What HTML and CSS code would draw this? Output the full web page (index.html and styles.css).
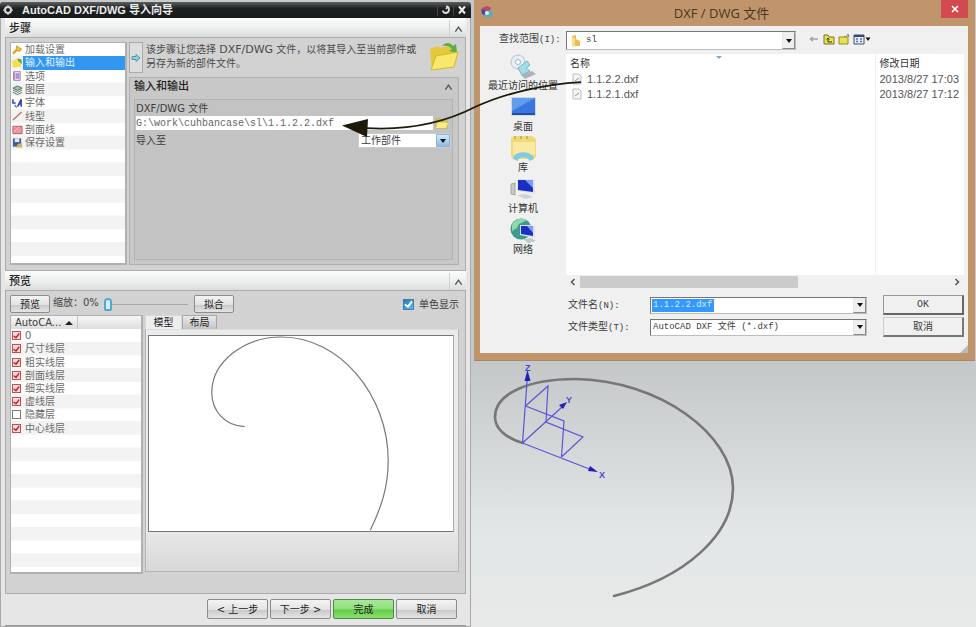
FILE: index.html
```html
<!DOCTYPE html>
<html lang="zh-CN">
<head>
<meta charset="utf-8">
<title>AutoCAD DXF/DWG 导入向导</title>
<link rel="stylesheet" href="styles.css">
</head>
<body>
<main class="desktop">
  <section class="wizard">
    <header class="wizard-title">
      <svg class="gear" viewBox="0 0 12 12"><circle cx="6" cy="6" r="3" fill="none" stroke="#ddd" stroke-width="2"/><path d="M6 1v2M6 9v2M1 6h2M9 6h2" stroke="#bbb" stroke-width="1.5"/></svg>
      <h1>AutoCAD DXF/DWG 导入向导</h1>
      <button class="title-btn" aria-label="重置"><svg viewBox="0 0 12 12"><path d="M6 2.500c4 0 4 6 0 6.500c-2 0-3-1-3-2.500M6 5l2-2.500" fill="none" stroke="#ddd" stroke-width="1.8"/></svg></button>
      <button class="title-btn" aria-label="关闭"><svg viewBox="0 0 12 12"><path d="M3 2.500l6 7M9 2.500l-6 7" stroke="#eee" stroke-width="2"/></svg></button>
    </header>

    <div class="wizard-body">
      <div class="band"><h2>步骤</h2><button class="fold" aria-label="折叠步骤"><svg viewBox="0 0 10 8"><path d="M1.500 7L5 2l3.500 5" fill="none" stroke="#555" stroke-width="1.500"/></svg></button></div>
      <div class="panel steps">
        <div class="sunken step-box">
          <ul class="rows step-rows">
            <li><svg viewBox="0 0 12 12"><path d="M1 10l4-4" stroke="#d9a520" stroke-width="2.500"/><path d="M5 1.500l5.500 3.500-2 2.500-4-1z" fill="#f0c030" stroke="#b88a20" stroke-width=".8"/></svg>加载设置</li>
            <li class="selected"><svg viewBox="0 0 12 12"><path d="M0 4l4-2 6 3v5l-9 1z" fill="#f5df4a"/><path d="M5 1l5 1 1 5-3-2z" fill="#4fa848"/></svg>输入和输出</li>
            <li><svg viewBox="0 0 12 12"><path d="M2 1h7v10H2z" fill="#ded4ee" stroke="#9d86c0"/><path d="M4 4h4M4 6h4M4 8h4" stroke="#775aa8"/><path d="M2 2v8" stroke="#c86d93" stroke-width="1.500"/></svg>选项</li>
            <li><svg viewBox="0 0 12 12"><path d="M1 4l5-2.500L11 4 6 6.500z" fill="#9fc2ac" stroke="#4b6a5a"/><path d="M1 6l5 2.500L11 6M1 8.500l5 2.500 5-2.500" fill="none" stroke="#4b6a5a"/></svg>图层</li>
            <li><svg viewBox="0 0 12 12"><path d="M1 2v4h3M6 10l4-8v8M7 7h3" fill="none" stroke="#2b3fb8" stroke-width="1.600"/><path d="M3 8l2 3" stroke="#5873dd" stroke-width="1.500"/></svg>字体</li>
            <li><svg viewBox="0 0 12 12"><path d="M1 10.500l9.500-9" stroke="#b06458" stroke-width="1.500"/></svg>线型</li>
            <li><svg viewBox="0 0 12 12"><path d="M1 2h10v8H1z" fill="#f0a3b0" stroke="#b4505f"/><path d="M2 6l3-3M4 9l6-6M8 9l2-2" stroke="#d77987"/></svg>剖面线</li>
            <li><svg viewBox="0 0 12 12"><path d="M1 1h9v9H1z" fill="#445a9d"/><path d="M3 1h5v4H3z" fill="#e5ebf6"/><path d="M6 7l5-1v5H5z" fill="#c6b862"/></svg>保存设置</li>
          </ul>
        </div>
        <div class="step-main">
          <div class="info">
            <button class="next-hint" aria-label="展开"><svg viewBox="0 0 10 10"><path d="M1 3.500h4v-2L9 5 5 8.500v-2H1z" fill="#8ed0dc" stroke="#4b98a8"/></svg></button>
            <p>该步骤让您选择 <span class="latin">DXF/DWG</span> 文件，以将其导入至当前部件或<br>另存为新的部件文件。</p>
            <svg class="big-folder" viewBox="0 0 30 30"><path d="M1 7l8-3 2 2 12-3 3 4-2 18-21 3z" fill="#e4c93a"/><path d="M13 4c4-5 9-3 11 0l3-2 1 9-8-2 3-2c-2-3-6-4-10-3z" fill="#56b04c"/><path d="M2 28l5-14 22-4-4 15z" fill="#f8e96c" stroke="#d5b92e"/></svg>
          </div>
          <div class="group">
            <div class="group-head"><h3>输入和输出</h3><button class="fold" aria-label="折叠输入和输出"><svg viewBox="0 0 10 8"><path d="M1.500 7L5 2l3.500 5" fill="none" stroke="#555" stroke-width="1.500"/></svg></button></div>
            <div class="group-body">
              <label for="path">DXF/DWG 文件</label>
              <div class="line">
                <input id="path" class="path" type="text" value="G:\work\cuhbancase\sl\1.1.2.2.dxf">
                <button class="browse" aria-label="浏览"><svg viewBox="0 0 14 12"><path d="M1 2h4l1 2h6v7H1z" fill="#e9d44e" stroke="#c9b12f"/><path d="M3 6h10l-2 5H1z" fill="#f6ec8c"/></svg></button>
              </div>
              <div class="line target">
                <label for="into">导入至</label>
                <span class="combo blue"><select id="into"><option>工作部件</option></select><i class="caret"></i></span>
              </div>
            </div>
          </div>
        </div>
      </div>

      <div class="band"><h2>预览</h2><button class="fold" aria-label="折叠预览"><svg viewBox="0 0 10 8"><path d="M1.500 7L5 2l3.500 5" fill="none" stroke="#555" stroke-width="1.500"/></svg></button></div>
      <div class="panel preview">
        <div class="tools">
          <button class="btn small">预览</button>
          <label class="zoom-label" for="zoom">缩放：0%</label>
          <input id="zoom" class="slider" type="range" min="0" max="100" value="0">
          <button class="btn small">拟合</button>
          <label class="mono-check"><input type="checkbox" class="check-blue" checked>单色显示</label>
        </div>
        <div class="split">
          <div class="sunken layer-box">
            <div class="layer-head"><span>AutoCA...</span><i class="sort"></i></div>
            <ul class="rows layer-rows">
              <li><label><input type="checkbox" class="check-red" checked>0</label></li>
              <li><label><input type="checkbox" class="check-red" checked>尺寸线层</label></li>
              <li><label><input type="checkbox" class="check-red" checked>粗实线层</label></li>
              <li><label><input type="checkbox" class="check-red" checked>剖面线层</label></li>
              <li><label><input type="checkbox" class="check-red" checked>细实线层</label></li>
              <li><label><input type="checkbox" class="check-red" checked>虚线层</label></li>
              <li><label><input type="checkbox" class="check-red">隐藏层</label></li>
              <li><label><input type="checkbox" class="check-red" checked>中心线层</label></li>
            </ul>
          </div>
          <div class="tabs">
            <div class="tab-row"><button class="tab active">模型</button><button class="tab">布局</button></div>
            <div class="tab-page">
              <div class="canvas">
                <svg viewBox="149 336 305 196" preserveAspectRatio="xMidYMid meet"><path d="M245 427C225 426 212 411 212 393C212 362 244 337 282 337C340 337 389 395 389 461C389 488 382 508 371 531" fill="none" stroke="#777" stroke-width="1.200"/></svg>
              </div>
            </div>
          </div>
        </div>
      </div>
      <footer class="actions">
        <button class="btn">&lt; 上一步</button>
        <button class="btn">下一步 &gt;</button>
        <button class="btn go">完成</button>
        <button class="btn">取消</button>
      </footer>
    </div>
  </section>

  <section class="workspace">
    <div class="dialog">
      <header class="dialog-title">
        <svg class="app-icon" viewBox="0 0 14 14"><path d="M2 3l5-2 4 2-2 4-6 1z" fill="#c94265"/><path d="M1 4l4 1 1 6-4-2z" fill="#3e4ea8"/><path d="M6 6l6-1 1 5-5 3-4-2z" fill="#5fa9b5"/><circle cx="7" cy="8" r="2" fill="#dcecf2"/></svg>
        <h2>DXF / DWG 文件</h2>
        <button class="close" aria-label="关闭"><svg viewBox="0 0 10 10"><path d="M2 2l6 6M8 2L2 8" stroke="#fff" stroke-width="1.600"/></svg></button>
      </header>
      <div class="dialog-body">
        <div class="lookup">
          <label for="dir">查找范围<span class="half">(I):</span></label>
          <span class="combo dir"><svg viewBox="0 0 10 12"><path d="M1 1l4-1v4l4 2v5H1z" fill="#e9c04e"/><path d="M1 2l3 1v8l-3 1z" fill="#f6dd86"/></svg><select id="dir" class="half"><option>sl</option></select><i class="caret"></i></span>
          <div class="nav">
            <button aria-label="后退"><svg viewBox="0 0 12 12"><path d="M10 6H3M5 4L2.500 6 5 8" fill="none" stroke="#9aa6ae" stroke-width="1.600"/></svg></button>
            <button aria-label="向上"><svg viewBox="0 0 12 12"><path d="M1 2h4l1 2h5v7H1z" fill="#e8e34a" stroke="#77752a"/><path d="M5 9V5M3.500 6.500L5 5l1.500 1.500M5 9h4" fill="none" stroke="#333"/></svg></button>
            <button aria-label="新建文件夹"><svg viewBox="0 0 12 12"><path d="M1 4h9v7H1z" fill="#e8e34a" stroke="#8f8a35"/><path d="M6 3l2 1 2-3 1 3" fill="none" stroke="#8a8a5a"/></svg></button>
            <button class="view" aria-label="视图"><svg viewBox="0 0 18 12"><path d="M1 2h10v9H1z" fill="#e9f0fa" stroke="#444f6d"/><path d="M1 3h10" stroke="#31487f" stroke-width="2"/><path d="M3 6h2M7 6h2M3 8.500h2M7 8.500h2" stroke="#5276b8" stroke-width="1.500"/><path d="M12.500 4.500h5L15 8z" fill="#111"/></svg></button>
          </div>
        </div>
        <div class="browser">
          <nav class="places">
            <a href="#recent"><svg viewBox="0 0 28 26"><path d="M12 22l11-4 4 3-11 5z" fill="#aeb3b8"/><circle cx="9" cy="9" r="7" fill="#e6f0f2" stroke="#b7c4ca"/><circle cx="9" cy="9" r="2.500" fill="#fff" stroke="#9fb5be"/><path d="M9 15l9-7 3 4-4 3 4 3-8 4z" fill="#a5dcea" stroke="#75b2c8"/></svg>最近访问的位置</a>
            <a href="#desktop"><svg viewBox="0 0 28 26"><path d="M2 3h25v19H2z" fill="#cfd8e4"/><path d="M3 4h23v17H3z" fill="#3a76e0"/><path d="M3 4h23L3 17z" fill="#639bef"/><path d="M3 19h23v2H3z" fill="#274ea0"/></svg>桌面</a>
            <a href="#library"><svg viewBox="0 0 28 26"><path d="M2 3l3-2h18l4 3v18l-3 2H4l-2-3z" fill="#f1d878"/><path d="M4 7h22v13H4z" fill="#fae9a2"/><path d="M6 1v3M12 1v3M18 1v3" stroke="#a68d3c"/><path d="M4 24c0-9 20-9 21 0l-5 2c0-5-11-5-11 0z" fill="#7fcbe0"/></svg>库</a>
            <a href="#computer"><svg viewBox="0 0 28 26"><path d="M2 8l4-1v12l-4-1z" fill="#c5c8c3" stroke="#a5a8a4"/><path d="M8 3h18v15L8 15z" fill="#dfe4ee"/><path d="M9 4h15v12L9 14z" fill="#1a2fc4"/><path d="M16 4h8v8z" fill="#7f9cf0"/><path d="M8 19l9-1 7 3-8 2z" fill="#ced2d4"/></svg>计算机</a>
            <a href="#network"><svg viewBox="0 0 28 26"><circle cx="12" cy="12" r="10.500" fill="#3c9a8f"/><path d="M3 8c3-7 12-7 14-5-2 3-7 2-8 6s-5 3-6 6z" fill="#8fd8a8"/><path d="M11 8h15v13l-15-3z" fill="#dfe4ee"/><path d="M12 9h12v10l-12-2z" fill="#1a2fc4"/><path d="M18 9h6v7z" fill="#7f9cf0"/><path d="M14 22l8-1 5 3-8 2z" fill="#c2c7ca"/></svg>网络</a>
          </nav>
          <div class="files">
            <i class="sort-mark"></i>
            <table>
              <thead><tr><th class="name">名称</th><th class="date">修改日期</th></tr></thead>
              <tbody>
                <tr><td><svg viewBox="0 0 10 12"><path d="M1 1h6l2 2v8H1z" fill="#f5f5f5" stroke="#b9bec2"/><path d="M3 8l4-3" stroke="#7fa08c"/></svg>1.1.2.2.dxf</td><td class="date">2013/8/27 17:03</td></tr>
                <tr><td><svg viewBox="0 0 10 12"><path d="M1 1h6l2 2v8H1z" fill="#f5f5f5" stroke="#b9bec2"/><path d="M3 8l4-3" stroke="#7fa08c"/></svg>1.1.2.1.dxf</td><td class="date">2013/8/27 17:12</td></tr>
              </tbody>
            </table>
            <div class="blank"></div>
            <div class="scroll">
              <svg viewBox="0 0 8 10"><path d="M5.500 2L2.500 5l3 3" fill="none" stroke="#555" stroke-width="1.500"/></svg>
              <div class="track"><div class="thumb"></div></div>
              <svg viewBox="0 0 8 10"><path d="M2.500 2l3 3-3 3" fill="none" stroke="#555" stroke-width="1.500"/></svg>
            </div>
          </div>
        </div>
        <div class="fields">
          <label for="fname">文件名<span class="half">(N):</span></label>
          <span class="combo"><input id="fname" class="half picked" type="text" value="1.1.2.2.dxf"><i class="caret"></i></span>
          <button class="classic default">OK</button>
          <label for="ftype">文件类型<span class="half">(T):</span></label>
          <span class="combo"><select id="ftype" class="half"><option>AutoCAD DXF 文件 (*.dxf)</option></select><i class="caret"></i></span>
          <button class="classic">取消</button>
        </div>
        <i class="grip"></i>
      </div>
    </div>
    <svg class="scene" viewBox="474 361 502 266" preserveAspectRatio="xMinYMin meet">
      <path d="M523 443C505 438 495 428 495 417C495 393 530 379 575 379C660 380 733 435 733 488C733 535 685 578 614 596" fill="none" stroke="#777" stroke-width="2.600" stroke-linecap="round"/>
      <g fill="none" stroke="#5a55d8" stroke-width="1.200">
        <path d="M522.500 443L527.500 375M522.500 443L592 470M522.500 443L562 407"/>
        <path d="M525.500 406L564 421L561.500 457M525.500 406L548 386L546 422L583 437L561.500 457"/>
      </g>
      <path d="M527.500 370l3 11h-6zM598 472l-10-1 2-5zM567 402l-4 7-4-4z" fill="#2020b8"/>
      <g class="axis"><text x="525" y="371">Z</text><text x="599" y="478">X</text><text x="566" y="403">Y</text></g>
    </svg>
  </section>

  <svg class="callout" viewBox="0 0 976 627" preserveAspectRatio="none" aria-hidden="true">
    <path d="M366 128C400 130 440 125 475 107C505 93 545 84 581 82" fill="none" stroke="#1d1b08" stroke-width="1.800"/>
    <path d="M342 125.500L368 119L367 137z" fill="#1d1b08"/>
  </svg>
</main>
</body>
</html>
```
FILE: styles.css
```css
* { box-sizing: border-box; }

body {
  margin: 0;
  font: 10px/13px "DejaVu Sans", "Noto Sans CJK SC", sans-serif;
  color: #3c3c3c;
}

h1, h2, h3, p, ul { margin: 0; padding: 0; font-weight: normal; }
ul { list-style: none; }
button, input, select { font: inherit; color: inherit; margin: 0; padding: 0; border: 0; background: none; border-radius: 0; min-width: 0; }
select, input { appearance: none; outline: 0; }
svg { display: block; flex: none; }

.desktop {
  position: relative;
  display: grid;
  grid-template-columns: minmax(0, 471fr) minmax(0, 505fr);
  min-height: 100vh;
  background: #c4c6c6;
}

/* Import wizard */
.wizard {
  display: flex;
  flex-direction: column;
  padding-top: 2px;
  background: #c9caca;
}
.wizard-title {
  display: flex;
  align-items: center;
  height: 16px;
  padding: 0 2px;
  color: #ececec;
  background: linear-gradient(#5c5f5f, #1e2121 40%, #171a1a);
  border-radius: 3px 3px 0 0;
}
.wizard-title h1 {
  flex: 1;
  font: bold 11px/14px "Liberation Sans", "Noto Sans CJK SC", sans-serif;
  padding-left: 8px;
}
.gear { width: 12px; height: 12px; }
.title-btn { width: 16px; display: grid; place-items: center; border-left: 1px solid #444; }
.title-btn svg { width: 12px; height: 12px; }

.wizard-body {
  flex: 1;
  display: flex;
  flex-direction: column;
  padding: 0 4px;
  background: #e6e6e6;
  border: 1px solid #a9a9a9;
  border-top: 0;
}
.band {
  display: flex;
  align-items: center;
  height: 19px;
  padding: 2px 0 0 4px;
  background: linear-gradient(#fcfcfc, #eef0ef 50%, #dcdedd);
}
.band h2, .group-head h3 { flex: 1; font-size: 11px; line-height: 15px; font-weight: 500; color: #222; }
.fold { display: grid; place-items: center; width: 17px; height: 17px; }
.band .fold { border-left: 1px solid #cfcfcf; }
.fold svg { width: 9px; height: 8px; }

.panel { background: #d2d2d2; border: 1px solid #acacac; }
.steps { display: flex; gap: 2px; height: 234px; padding: 4px 6px 5px 4px; }
.sunken { background: #fff; border: 1px solid #b0b0b0; border-width: 1px 2px 2px 1px; }

.rows {
  display: grid;
  background: linear-gradient(#fff 50%, #f3f3f3 50%);
  color: #6a6a6a;
}
.rows li { display: flex; align-items: center; min-height: 0; white-space: nowrap; }
.step-box { width: 117px; }
.step-rows { height: 213px; grid-template-rows: repeat(16, 1fr); background-size: 100% calc(100% / 8); }
.step-rows li { gap: 2px; padding-left: 1px; }
.step-rows svg { width: 11px; height: 12px; }
.step-rows .selected { color: #e4f2ff; background: linear-gradient(90deg, transparent 12px, #3297f0 12px); }

.step-main { flex: 1; display: flex; flex-direction: column; gap: 4px; min-width: 0; }
.info { display: flex; height: 31px; color: #4a4a4a; }
.info p { flex: 1; padding: 1px 0 0 3px; line-height: 14px; white-space: nowrap; }
.latin { font-size: 11px; line-height: 1; }
.next-hint { width: 14px; display: grid; place-items: center; background: #dedede; border: 1px solid #aaa; }
.next-hint svg { width: 10px; height: 10px; }
.big-folder { width: 30px; height: 30px; }

.group { flex: 1; display: flex; flex-direction: column; padding: 0 5px 4px 4px; background: #c8c8c8; border: 1px solid #b0b0b0; }
.group-head { display: flex; align-items: center; height: 21px; padding-bottom: 4px; }
.group-head .fold { margin-right: -4px; }
.group-body { flex: 1; padding: 1px 1px 0; background: #c3c3c3; border: 1px solid #b3b3b3; }
.group-body > label { display: block; line-height: 15px; }
.line { display: flex; align-items: center; justify-content: space-between; }
.path { flex: 1; height: 14px; background: #fff; font: 10px/13px "Liberation Mono", monospace; color: #666; }
.browse { width: 18px; display: grid; place-items: center; }
.browse svg { width: 14px; height: 12px; }
.target { padding-top: 3px; }

.combo { display: flex; align-items: stretch; height: 17px; background: #fff; border: 1px solid #bdbdbd; border-top-color: #777; border-left-color: #777; }
.combo select, .combo input { flex: 1; padding: 0 2px; }
.caret { flex: none; width: 13px; display: grid; place-items: center; background: #efefef; border: 1px solid #8a8a8a; border-top-color: #e8e8e8; border-left-color: #e8e8e8; }
.caret::before { content: ""; border: 4px solid transparent; border-width: 4px 3px 0; border-top-color: #111; }
.blue { width: 93px; height: 15px; border-color: #ccc; }
.blue .caret { width: 14px; background: linear-gradient(#d7e9f8, #8db9e3); border-color: #8fb5dc; }

/* Preview */
.preview { flex: 1; display: flex; flex-direction: column; padding: 3px 6px 19px 4px; }
.tools { display: flex; align-items: center; height: 20px; }
.btn {
  height: 20px;
  width: 61px;
  font-size: 10px;
  color: #222;
  background: linear-gradient(#f4f4f4, #e2e2e2 55%, #c9c9c9 56%, #e4e4e4);
  border: 1px solid #8c8c8c;
  border-radius: 2px;
}
.small { width: 40px; height: 18px; }
.zoom-label { padding: 0 5px 3px 3px; color: #444; }
.slider { width: 84px; height: 16px; margin-right: 6px; background: linear-gradient(#aaa, #aaa) center / 100% 1px no-repeat; }
.slider::-webkit-slider-thumb { appearance: none; width: 8px; height: 13px; background: #d6effa; border: 2px solid #4fa9d0; border-radius: 4px 4px 2px 2px; }
.mono-check { display: flex; align-items: center; gap: 5px; margin-left: auto; }
.check-blue { width: 11px; height: 11px; background: linear-gradient(135deg, #2f75b5, #5cc0e8); border: 1px solid #3a7fae; }
.check-blue::before, .check-red:checked::before {
  content: "";
  display: block;
  width: 100%;
  height: 100%;
  background: #fff;
  clip-path: polygon(10% 45%, 40% 65%, 85% 10%, 95% 30%, 45% 95%, 5% 65%);
}

.split { flex: 1; display: flex; gap: 2px; padding-top: 1px; }
.layer-box { width: 133px; }
.layer-head { display: flex; align-items: center; height: 13px; padding-left: 4px; background: linear-gradient(#f6f6f6, #dedede); }
.layer-head span { width: 50px; }
.sort { border: 4px solid transparent; border-width: 0 4px 4px; border-bottom-color: #222; }
.layer-head::after { content: ""; align-self: stretch; margin-left: 4px; border-left: 1px solid #c4c4c4; }
.layer-rows { height: 238px; grid-template-rows: repeat(18, 1fr); background-size: 100% calc(100% / 9); }
.layer-rows label { display: flex; align-items: center; gap: 4px; padding-left: 1px; }
.check-red { width: 9px; height: 9px; border: 1px solid #777; background: #fff; }
.check-red:checked { border-color: #c05050; background: #f7dcdc; }
.check-red:checked::before { background: #c81e28; }

.tabs { flex: 1; display: flex; flex-direction: column; min-width: 0; padding-bottom: 2px; }
.tab-row { display: flex; align-items: flex-end; height: 14px; }
.tab { width: 35px; height: 14px; line-height: 12px; background: linear-gradient(#e8e8e8, #c4c4c4); border: 1px solid #a8a8a8; border-bottom: 0; color: #222; }
.tab.active { width: 37px; height: 15px; background: #eee; border-color: #d8d8d8; margin-bottom: -1px; }
.tab-page { flex: 1; padding: 5px 4px 39px 2px; background: linear-gradient(#ebebeb 80%, #d8d8d8); border: 1px solid #b4b4b4; border-top-color: #ddd; }
.canvas { height: 100%; background: #fff; border: 1px solid #777; border-right-color: #aaa; }
.canvas svg { width: 100%; height: 100%; }

.actions { display: flex; justify-content: flex-end; gap: 2px; padding: 5px 9px 6px 0; border-bottom: 1px solid #999; }
.go { background: linear-gradient(#a9e79a, #8fe07c 50%, #62cc48 55%, #8be070); border-color: #4f8a44; }

/* Workspace and file dialog */
.workspace { display: flex; flex-direction: column; min-width: 0; padding-left: 3px; background: linear-gradient(#c4c8c8 58%, #e3e7e7 85%, #e8e9e9); }
.dialog { display: flex; flex-direction: column; height: 361px; margin-right: 1px; padding: 0 7px 7px 6px; background: #c1956b; border: 1px solid #a98664; border-width: 0 0 1px; font-family: "Liberation Sans", "Noto Sans CJK SC", sans-serif; }
.dialog-title { display: flex; align-items: flex-start; height: 26px; }
.dialog-title h2 { flex: 1; text-align: center; padding-left: 8px; font: 13px/26px "Open Sans", "Noto Sans CJK SC", sans-serif; color: #4a3624; }
.app-icon { width: 14px; height: 14px; margin-top: 5px; }
.close { width: 27px; height: 18px; display: grid; place-items: center; background: #d04a50; }
.close svg { width: 10px; height: 10px; }

.dialog-body { position: relative; flex: 1; display: flex; flex-direction: column; background: #f0f0f0; padding: 5px 4px 0 0; }
.half { font: 9px/13px "Liberation Mono", "Noto Sans CJK SC", monospace; }
.lookup { display: flex; align-items: center; height: 19px; }
.lookup label { width: 86px; padding-left: 19px; padding-bottom: 3px; }
.dir { width: 230px; height: 19px; align-items: center; padding-left: 4px; }
.dir svg { width: 10px; height: 12px; }
.dir select { padding-left: 5px; }
.dir .caret { align-self: stretch; }
.nav { display: flex; gap: 3px; padding: 0 0 4px 12px; }
.nav svg { width: 12px; height: 12px; }
.nav .view svg { width: 18px; }

.browser { display: flex; height: 239px; padding-top: 4px; }
.places { width: 86px; display: flex; flex-direction: column; }
.places a { display: flex; flex-direction: column; align-items: center; height: 41px; margin-top: -1px; margin-bottom: 1px; white-space: nowrap; color: #333; text-decoration: none; }
.places svg { width: 28px; height: 26px; }
.files { position: relative; flex: 1; display: flex; flex-direction: column; background: #fff; min-width: 0; }
.files table { width: 100%; border-collapse: collapse; font-size: 11px; color: #555; }
.files th { height: 18px; padding: 0 0 0 4px; font-size: 10px; font-weight: normal; text-align: left; color: #333; }
.files td { height: 15px; padding: 0 0 0 6px; line-height: 15px; }
.files td svg { display: inline-block; width: 10px; height: 12px; margin-right: 5px; vertical-align: -2px; }
.files .date { width: 89px; padding-left: 4px; border-left: 1px solid #f1f1f1; }
.blank { flex: 1; margin-right: 88px; border-right: 1px solid #f1f1f1; }
.sort-mark { position: absolute; left: 150px; top: 2px; border: 3px solid transparent; border-width: 3px 3px 0; border-top-color: #7fa7c9; }
.scroll { display: flex; align-items: center; height: 14px; padding: 0 3px; background: #f0f0f0; }
.scroll svg { width: 8px; height: 10px; }
.track { flex: 1; padding: 0 3px; }
.thumb { width: 59%; height: 12px; background: #cbcbcb; }

.fields { display: grid; grid-template-columns: 82px minmax(0, 1fr) 81px; row-gap: 2px; align-items: center; padding: 6px 0 0 88px; }
.fields .combo { margin-right: 16px; height: 17px; }
.picked { color: #d8ecff; background: linear-gradient(#3399ff, #3399ff) 1px 1px / 62px 13px no-repeat; }
.classic { height: 20px; background: #f0f0f0; border: 1px solid #777; border-width: 1px 2px 2px 1px; border-top-color: #ccc; border-left-color: #ccc; font-size: 10px; line-height: 12px; }
.default { border-color: #666; border-top-color: #999; border-left-color: #999; font-family: "Liberation Mono", monospace; }
.grip { position: absolute; right: 0; bottom: 0; border: 4px solid #bbb; border-top-color: transparent; border-left-color: transparent; }

.scene { width: 100%; }
.axis { font: bold 9px "Liberation Sans", sans-serif; fill: #4a45d8; }
.callout { position: absolute; inset: 0; width: 100%; height: 100%; pointer-events: none; }
```
